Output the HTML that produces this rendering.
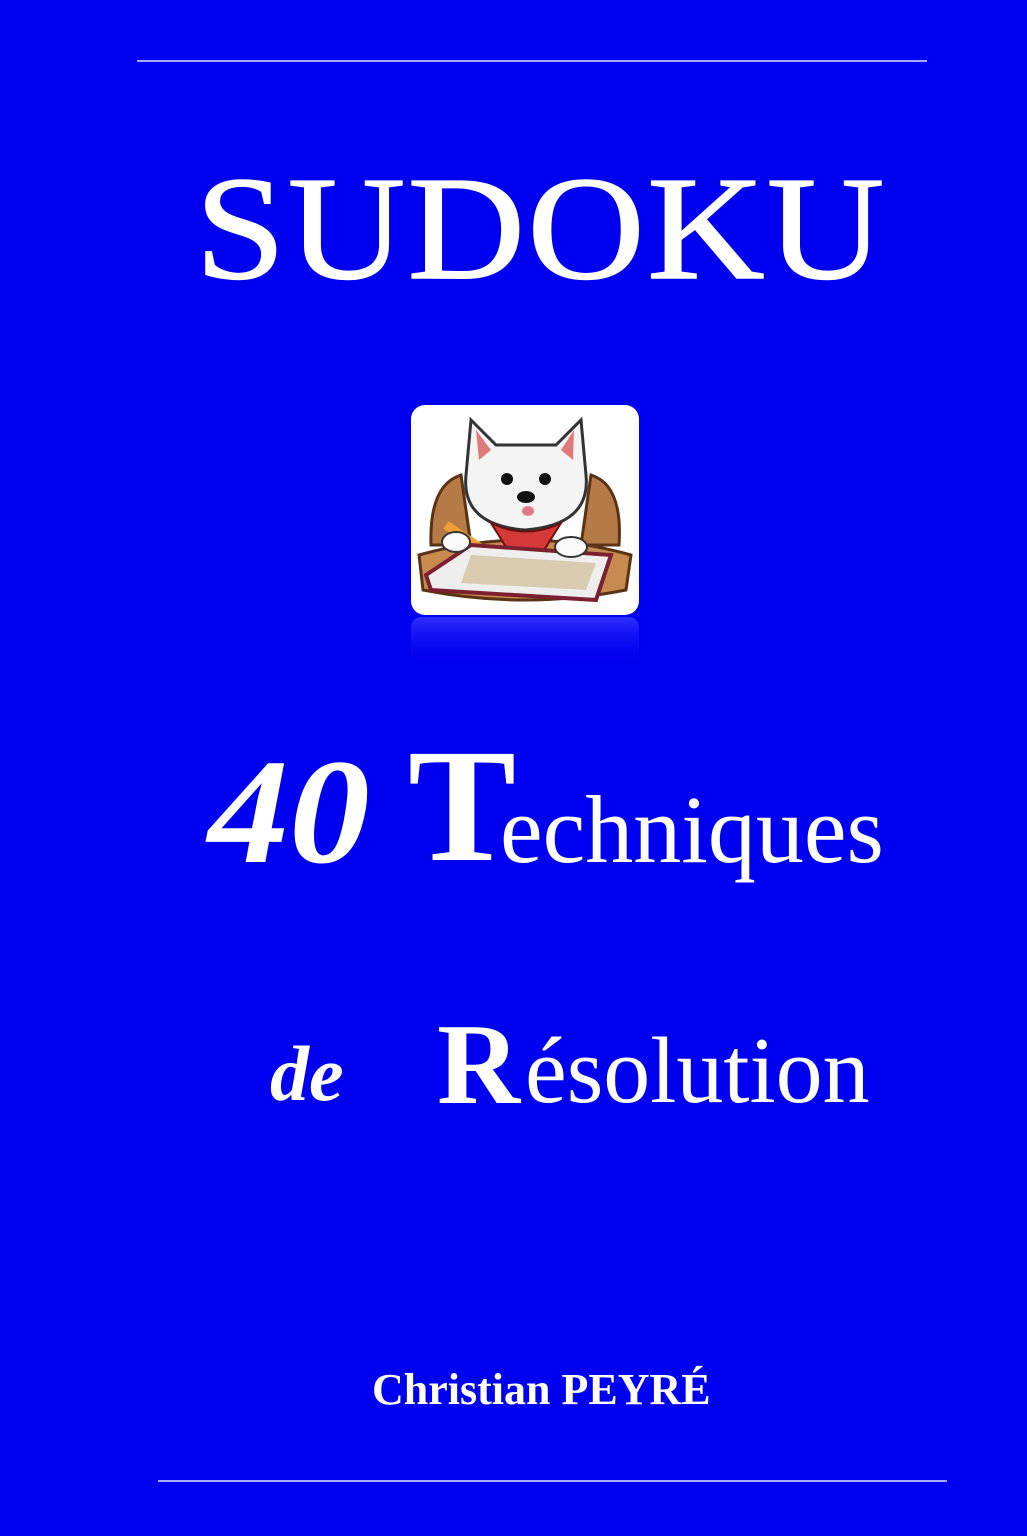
<!DOCTYPE html>
<html><head><meta charset="utf-8"><style>
html,body{margin:0;padding:0}
body{width:1027px;height:1536px;background:#0000f0;position:relative;overflow:hidden;font-family:"Liberation Serif",serif;color:#fff}
.t{position:absolute;line-height:1;white-space:nowrap}
.ln{position:absolute;height:2px;background:#a8a8ff}
</style></head><body>
<div class="ln" style="left:137px;top:60px;width:790px"></div>
<div class="ln" style="left:158px;top:1480px;width:789px"></div>
<div class="t" style="left:195px;top:155px;font-size:148px;letter-spacing:2px;-webkit-text-stroke:1.5px #fff;transform:scaleX(1.1);transform-origin:left">SUDOKU</div>

<svg style="position:absolute;left:411px;top:405px" width="228" height="270" viewBox="0 0 228 270">
<defs><linearGradient id="rf" x1="0" y1="0" x2="0" y2="1"><stop offset="0" stop-color="#3a3aff" stop-opacity=".8"/><stop offset="1" stop-color="#0000f0" stop-opacity="0"/></linearGradient></defs>
<rect x="0" y="0" width="228" height="210" rx="14" fill="#fff"/>
<rect x="0" y="212" width="228" height="50" rx="10" fill="url(#rf)"/>
<path d="M20 140 Q18 80 50 70 L60 140 Z" fill="#b57a45" stroke="#5a3315" stroke-width="3"/>
<path d="M208 140 Q212 80 180 70 L170 140 Z" fill="#b57a45" stroke="#5a3315" stroke-width="3"/>
<path d="M8 150 Q114 120 220 150 L215 185 Q114 205 12 185 Z" fill="#c98a50" stroke="#5a3315" stroke-width="3"/>
<path d="M60 15 L85 40 L145 40 L170 15 L175 70 Q180 120 114 125 Q50 120 55 70 Z" fill="#f4f4f4" stroke="#333" stroke-width="3"/>
<path d="M65 25 L80 45 L68 55 Z M163 25 L150 45 L162 55 Z" fill="#e07a7a"/>
<circle cx="96" cy="74" r="6" fill="#111"/><circle cx="134" cy="74" r="6" fill="#111"/>
<ellipse cx="115" cy="92" rx="9" ry="6" fill="#111"/>
<ellipse cx="117" cy="106" rx="6" ry="5" fill="#e07a8a"/>
<path d="M80 118 Q115 135 150 118 L130 150 L100 150 Z" fill="#d43a3a" stroke="#6a1010" stroke-width="2"/>
<path d="M35 120 L80 150" stroke="#f0a030" stroke-width="9"/>
<path d="M15 170 L60 140 L200 150 L185 195 L20 185 Z" fill="#eee" stroke="#7a2030" stroke-width="4"/>
<path d="M60 150 L185 158 L175 185 L50 178 Z" fill="#d8cbb0"/>
<ellipse cx="45" cy="137" rx="14" ry="10" fill="#fafafa" stroke="#333" stroke-width="2"/>
<ellipse cx="160" cy="142" rx="16" ry="10" fill="#fafafa" stroke="#333" stroke-width="2"/>
</svg>

<div class="t" style="left:208px;top:737px;font-size:150px;font-weight:bold;font-style:italic;transform:scaleX(1.08);transform-origin:left">40</div>
<div class="t" style="left:408px;top:726px;font-size:162px;font-weight:bold">T</div>
<div class="t" style="left:500px;top:782px;font-size:96px">echniques</div>
<div class="t" style="left:270px;top:1035px;font-size:78px;font-weight:bold;font-style:italic">de</div>
<div class="t" style="left:437px;top:1007px;font-size:115px;font-weight:bold">R</div>
<div class="t" style="left:525px;top:1024px;font-size:94px">ésolution</div>
<div class="t" style="left:372px;top:1368px;font-size:44px;font-weight:bold">Christian PEYRÉ</div>
</body></html>
